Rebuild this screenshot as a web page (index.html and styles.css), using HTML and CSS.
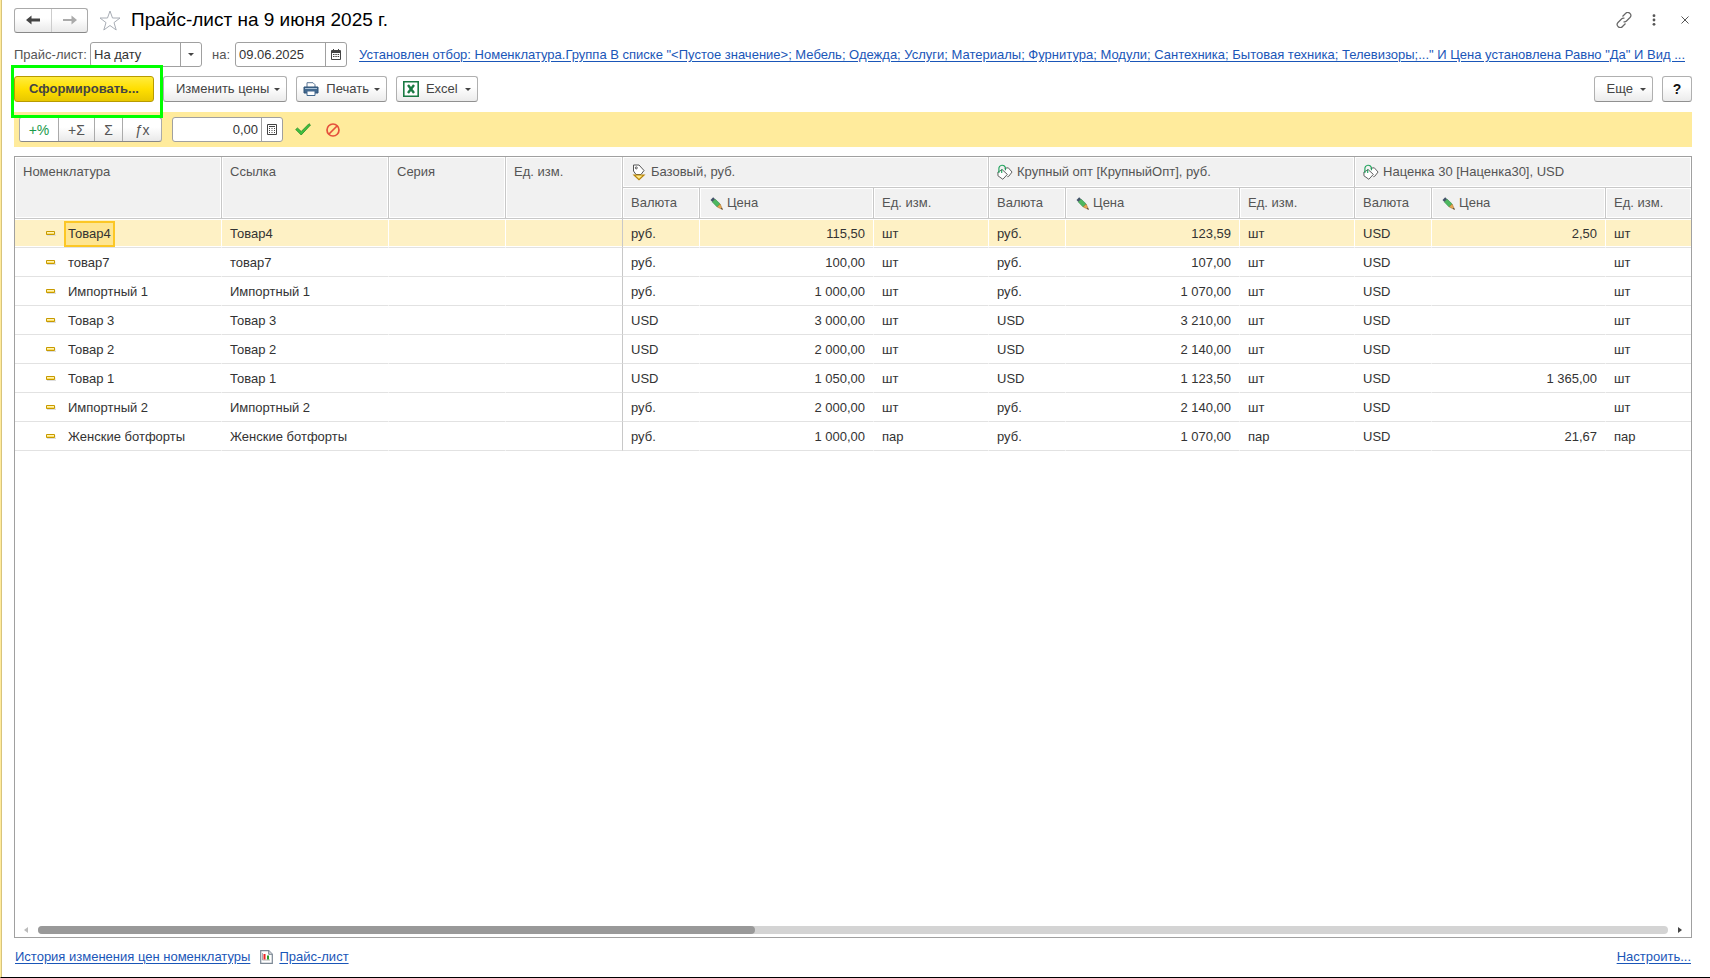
FILE: index.html
```html
<!DOCTYPE html>
<html lang="ru">
<head>
  <meta charset="UTF-8">
  <title>Прайс-лист на 9 июня 2025 г.</title>
  <link rel="stylesheet" href="styles.css">
</head>
<body>
  <!-- icons -->
  <svg class="sprite" aria-hidden="true">
    <symbol id="i-tag" viewBox="0 0 14 17">
      <path d="M1.500 1h5.500l5 5.500-3 4H4L1.500 7z" fill="#fff" stroke="#555"/>
      <circle cx="4.300" cy="3.900" r="1" fill="none" stroke="#555"/>
      <path d="M2 11h10L7 15.700z" fill="#ffe88a" stroke="#b8860b" stroke-width="1.200"/>
    </symbol>
    <symbol id="i-tags" viewBox="0 0 17 17">
      <path d="M8 4l4-.5 4 4.500-3.500 4.500-1.500.5" fill="#fff" stroke="#555"/>
      <path d="M1 8l4.500-2.500 5.500 5-4.800 5.200L1 12z" fill="#fff" stroke="#555"/>
      <path d="M2 9V4.500a3.500 3.500 0 0 1 7-.5V6M5 5v4" fill="none" stroke="#1fa35c" stroke-width="1.200"/>
    </symbol>
    <symbol id="i-pencil" viewBox="0 0 13 13">
      <path d="M.5 3L3.200.3l2 1.900-2.800 2.900z" fill="#44546a"/>
      <path d="M2.400 5.100l2.800-2.900 5 4.800-3 3z" fill="#4db85f" stroke="#2f8a45" stroke-width=".6"/>
      <path d="M7.200 10l3-3 2.300 5.500z" fill="#e8a850" stroke="#9a6b2c" stroke-width=".5"/>
      <path d="M10.800 11.800l1.200-1 .7 1.900z" fill="#444"/>
    </symbol>
    <symbol id="i-item" viewBox="0 0 10 6">
      <path d="M1 4.500h9V1.500" fill="none" stroke="#ddd"/>
      <path d="M.5.5h8v3h-8z" fill="#ffe169" stroke="#c79a00"/>
      <path d="M1 1.500h7" stroke="#fff3b5"/>
    </symbol>
    <symbol id="i-calendar" viewBox="0 0 10 11">
      <path d="M.5 1.500h9v9h-9z" fill="#fff" stroke="#444"/>
      <path d="M1 2.500h8M1 3.500h8M2.500 0v2M7.500 0v2" stroke="#444"/>
      <path d="M2 5.500h1.500m.8 0h1.500m.8 0h1.500M2 7.500h1.500m.8 0h1.500m.8 0h1.500" stroke="#444"/>
    </symbol>
    <symbol id="i-calc" viewBox="0 0 10 11">
      <path d="M.5.5h9v10h-9z" fill="#fff" stroke="#444"/>
      <path d="M2 2.500h6" stroke="#444"/>
      <path d="M2 4.500h1m1.500 0h1m1.500 0h1M2 6.500h1m1.500 0h1m1.500 0h1M2 8.500h1m1.500 0h1m1.500 0h1" stroke="#444"/>
    </symbol>
  </svg>

  <header class="title-row">
    <div class="nav">
      <button type="button" aria-label="Назад"><svg width="14" height="10" viewBox="0 0 14 10"><path d="M0 5l5.500-4.500v3H14v3H5.500v3z" fill="#444"/></svg></button>
      <button type="button" aria-label="Вперед" disabled><svg width="14" height="10" viewBox="0 0 14 10"><path d="M14 5L8.500.5v3.500H0v2h8.500v3.500z" fill="#aaa"/></svg></button>
    </div>
    <svg class="star" width="22" height="21" viewBox="0 0 22 21"><path d="M11 1l2.500 7h7.500l-6 4.600 2.200 7.400-6.200-4.500L4.800 20 7 12.600 1 8h7.500z" fill="#fff" stroke="#a8adb5"/></svg>
    <h1>Прайс-лист на 9 июня 2025 г.</h1>
    <div class="window-tools">
      <button type="button" aria-label="Ссылка"><svg width="16" height="16" viewBox="0 0 16 16" fill="none" stroke="#666" stroke-width="1.200"><path d="M6.500 4.500l3-3a2.900 2.900 0 0 1 4.500 4l-3.500 3.500a2.900 2.900 0 0 1-3 .7M9.500 11.500l-3 3a2.900 2.900 0 0 1-4.500-4L5.500 7a2.900 2.900 0 0 1 3-.7"/></svg></button>
      <button class="tool-menu" type="button" aria-label="Меню"><svg width="4" height="12" viewBox="0 0 4 12" fill="#555"><circle cx="2" cy="1.700" r="1.400"/><circle cx="2" cy="6" r="1.400"/><circle cx="2" cy="10.300" r="1.400"/></svg></button>
      <button type="button" aria-label="Закрыть"><svg width="8" height="8" viewBox="0 0 8 8" stroke="#555"><path d="M.5.5l7 7M7.500.5l-7 7"/></svg></button>
    </div>
  </header>

  <div class="filter-row">
    <label for="mode">Прайс-лист:</label>
    <div class="field">
      <select id="mode"><option>На дату</option></select>
      <span class="field-btn"><i class="caret"></i></span>
    </div>
    <label class="label-on" for="date">на:</label>
    <div class="field">
      <input id="date" type="text" value="09.06.2025">
      <button class="field-btn" type="button" aria-label="Календарь"><svg width="10" height="11"><use href="#i-calendar"/></svg></button>
    </div>
    <a class="filter-link" href="#">Установлен отбор: Номенклатура.Группа В списке "&lt;Пустое значение&gt;; Мебель; Одежда; Услуги; Материалы; Фурнитура; Модули; Сантехника; Бытовая техника; Телевизоры;..." И Цена установлена Равно "Да" И Вид ...</a>
  </div>

  <div class="command-row">
    <div class="highlight"><button class="btn btn-main" type="button">Сформировать...</button></div>
    <button class="btn btn-prices" type="button">Изменить цены <i class="caret"></i></button>
    <button class="btn" type="button">
      <svg width="16" height="14" viewBox="0 0 16 14"><path d="M4 5V.7h6l2 2V5" fill="#fff" stroke="#5b7594"/><path d="M1 5h14v6H1z" fill="#42698f" stroke="#2f5376"/><path d="M2 6.500h12" stroke="#a9c1d8"/><path d="M4 9h8v4.500H4z" fill="#fff" stroke="#42698f"/></svg>
      Печать <i class="caret"></i>
    </button>
    <button class="btn btn-excel" type="button">
      <svg width="16" height="16" viewBox="0 0 16 16"><path d="M.8.8h14.400v14.400H.8z" fill="#fff" stroke="#1a7a43" stroke-width="1.600"/><path d="M5 4l6 8M11 4l-6 8" stroke="#1a7a43" stroke-width="2.400"/></svg>
      Excel <i class="caret"></i>
    </button>
    <button class="btn btn-more" type="button">Еще <i class="caret"></i></button>
    <button class="btn btn-help" type="button">?</button>
  </div>

  <div class="edit-panel">
    <div class="calc-group">
      <button class="calc-percent" type="button">+%</button>
      <button class="calc-add" type="button">+Σ</button>
      <button class="calc-sum" type="button">Σ</button>
      <button class="calc-fx" type="button"><em>ƒ</em>x</button>
    </div>
    <div class="field field-amount">
      <input type="text" value="0,00" aria-label="Значение">
      <button class="field-btn" type="button" aria-label="Калькулятор"><svg width="10" height="11"><use href="#i-calc"/></svg></button>
    </div>
    <button class="icon-btn" type="button" aria-label="Применить"><svg width="16" height="13" viewBox="0 0 16 13"><path d="M.7 6.500L2.500 5l3.700 3.500L14 .7l1.500 1.300-9.300 10z" fill="#3fc03f" stroke="#268a26" stroke-width=".8"/></svg></button>
    <button class="icon-btn" type="button" aria-label="Отменить"><svg width="14" height="14" viewBox="0 0 14 14" fill="none" stroke="#e5503c" stroke-width="1.700"><circle cx="7" cy="7" r="6"/><path d="M3 11l8-8"/></svg></button>
  </div>

  <main class="grid">
    <div class="grid-view">
      <table>
        <colgroup>
          <col class="c-name"><col class="c-link"><col class="c-mid"><col class="c-mid">
          <col class="c-cur"><col class="c-price"><col class="c-unit">
          <col class="c-cur"><col class="c-price"><col class="c-unit">
          <col class="c-cur"><col class="c-price"><col>
        </colgroup>
        <thead>
          <tr>
            <th rowspan="2">Номенклатура</th>
            <th rowspan="2">Ссылка</th>
            <th rowspan="2">Серия</th>
            <th rowspan="2">Ед. изм.</th>
            <th colspan="3"><span class="head"><svg width="16" height="17"><use href="#i-tag"/></svg>Базовый, руб.</span></th>
            <th colspan="3"><span class="head"><svg width="16" height="17"><use href="#i-tags"/></svg>Крупный опт [КрупныйОпт], руб.</span></th>
            <th colspan="3"><span class="head"><svg width="16" height="17"><use href="#i-tags"/></svg>Наценка 30 [Наценка30], USD</span></th>
          </tr>
          <tr>
            <th>Валюта</th>
            <th><span class="head head-price"><svg width="13" height="13"><use href="#i-pencil"/></svg>Цена</span></th>
            <th>Ед. изм.</th>
            <th>Валюта</th>
            <th><span class="head head-price"><svg width="13" height="13"><use href="#i-pencil"/></svg>Цена</span></th>
            <th>Ед. изм.</th>
            <th>Валюта</th>
            <th><span class="head head-price"><svg width="13" height="13"><use href="#i-pencil"/></svg>Цена</span></th>
            <th>Ед. изм.</th>
          </tr>
        </thead>
        <tbody>
          <tr class="selected">
            <td><svg width="10" height="6"><use href="#i-item"/></svg><span class="cell">Товар4</span></td><td>Товар4</td><td></td><td class="fixed-end"></td>
            <td>руб.</td><td class="num">115,50</td><td>шт</td>
            <td>руб.</td><td class="num">123,59</td><td>шт</td>
            <td>USD</td><td class="num">2,50</td><td>шт</td>
          </tr>
          <tr>
            <td><svg width="10" height="6"><use href="#i-item"/></svg><span class="cell">товар7</span></td><td>товар7</td><td></td><td class="fixed-end"></td>
            <td>руб.</td><td class="num">100,00</td><td>шт</td>
            <td>руб.</td><td class="num">107,00</td><td>шт</td>
            <td>USD</td><td class="num"></td><td>шт</td>
          </tr>
          <tr>
            <td><svg width="10" height="6"><use href="#i-item"/></svg><span class="cell">Импортный 1</span></td><td>Импортный 1</td><td></td><td class="fixed-end"></td>
            <td>руб.</td><td class="num">1 000,00</td><td>шт</td>
            <td>руб.</td><td class="num">1 070,00</td><td>шт</td>
            <td>USD</td><td class="num"></td><td>шт</td>
          </tr>
          <tr>
            <td><svg width="10" height="6"><use href="#i-item"/></svg><span class="cell">Товар 3</span></td><td>Товар 3</td><td></td><td class="fixed-end"></td>
            <td>USD</td><td class="num">3 000,00</td><td>шт</td>
            <td>USD</td><td class="num">3 210,00</td><td>шт</td>
            <td>USD</td><td class="num"></td><td>шт</td>
          </tr>
          <tr>
            <td><svg width="10" height="6"><use href="#i-item"/></svg><span class="cell">Товар 2</span></td><td>Товар 2</td><td></td><td class="fixed-end"></td>
            <td>USD</td><td class="num">2 000,00</td><td>шт</td>
            <td>USD</td><td class="num">2 140,00</td><td>шт</td>
            <td>USD</td><td class="num"></td><td>шт</td>
          </tr>
          <tr>
            <td><svg width="10" height="6"><use href="#i-item"/></svg><span class="cell">Товар 1</span></td><td>Товар 1</td><td></td><td class="fixed-end"></td>
            <td>USD</td><td class="num">1 050,00</td><td>шт</td>
            <td>USD</td><td class="num">1 123,50</td><td>шт</td>
            <td>USD</td><td class="num">1 365,00</td><td>шт</td>
          </tr>
          <tr>
            <td><svg width="10" height="6"><use href="#i-item"/></svg><span class="cell">Импортный 2</span></td><td>Импортный 2</td><td></td><td class="fixed-end"></td>
            <td>руб.</td><td class="num">2 000,00</td><td>шт</td>
            <td>руб.</td><td class="num">2 140,00</td><td>шт</td>
            <td>USD</td><td class="num"></td><td>шт</td>
          </tr>
          <tr>
            <td><svg width="10" height="6"><use href="#i-item"/></svg><span class="cell">Женские ботфорты</span></td><td>Женские ботфорты</td><td></td><td class="fixed-end"></td>
            <td>руб.</td><td class="num">1 000,00</td><td>пар</td>
            <td>руб.</td><td class="num">1 070,00</td><td>пар</td>
            <td>USD</td><td class="num">21,67</td><td>пар</td>
          </tr>
        </tbody>
      </table>
    </div>
    <div class="scrollbar">
      <svg width="4" height="6" viewBox="0 0 4 6"><path d="M4 0v6L0 3z" fill="#bbb"/></svg>
      <div class="track"><div class="thumb"></div></div>
      <svg width="4" height="6" viewBox="0 0 4 6"><path d="M0 0v6l4-3z" fill="#444"/></svg>
    </div>
  </main>

  <footer class="bottom-row">
    <a href="#">История изменения цен номенклатуры</a>
    <svg width="13" height="14" viewBox="0 0 13 14"><path d="M.7.7h8l3.600 3.600v9H.7z" fill="#fff" stroke="#7b8794" stroke-width="1.200"/><path d="M8.700.7v3.600h3.600" fill="#ddd" stroke="#7b8794"/><path d="M2.500 3v7H10" fill="none" stroke="#999" stroke-width=".8"/><path d="M4.500 4v5.500" stroke="#e22" stroke-width="2"/><path d="M8 5.500v4" stroke="#2a9a2a" stroke-width="2"/></svg>
    <a href="#">Прайс-лист</a>
    <a class="setup" href="#">Настроить...</a>
  </footer>
</body>
</html>
```
FILE: styles.css
```css
* {
  box-sizing: border-box;
}

body {
  margin: 0;
  height: 100vh;
  padding: 6px 18px 0 13px;
  display: flex;
  flex-direction: column;
  font-family: "Liberation Sans", Arial, sans-serif;
  font-size: 13px;
  line-height: 16px;
  color: #333;
  background: #fff;
  border-left: 1px solid #ffeb9c;
  border-bottom: 1px solid #000;
  box-shadow: inset 1px 0 #d8c47c;
}

.sprite {
  position: absolute;
  width: 0;
  height: 0;
}

svg {
  flex: none;
}

button,
input,
select {
  font: inherit;
  color: inherit;
  margin: 0;
}

button {
  padding: 0;
  background: none;
  border: none;
}

a {
  color: #1a56b8;
  text-decoration: underline;
  text-underline-offset: 2px;
}

.caret {
  display: inline-block;
  border: 3px solid transparent;
  border-top-color: #444;
  border-bottom: 0;
}

/* title */
.title-row {
  display: flex;
  align-items: center;
  height: 28px;
}

.nav,
.calc-group {
  display: flex;
  height: 25px;
  border: 1px solid #aaa;
  border-bottom-color: #888;
  border-radius: 3px;
  background: linear-gradient(#fff 40%, #e9e9e9);
}

.nav button {
  width: 36px;
  display: flex;
  align-items: center;
  justify-content: center;
}

.nav button + button {
  border-left: 1px solid #ccc;
}

.star {
  margin: 0 10px 0 11px;
}

h1 {
  margin: 0;
  font-size: 19px;
  line-height: 24px;
  font-weight: normal;
  color: #000;
}

.window-tools {
  display: flex;
  align-items: center;
  gap: 20px;
  margin-left: auto;
  padding-right: 3px;
}

.window-tools button {
  display: flex;
}

.window-tools .tool-menu {
  padding-right: 5px;
}

/* filter */
.filter-row {
  display: flex;
  align-items: center;
  height: 25px;
  margin-top: 8px;
}

.filter-row label {
  width: 76px;
  color: #555;
}

.filter-row .label-on {
  width: 33px;
  padding-left: 10px;
}

.field {
  display: flex;
  flex: none;
  width: 112px;
  height: 25px;
  border: 1px solid #a0a0a0;
  border-radius: 3px;
  background: #fff;
  overflow: hidden;
}

.field input,
.field select {
  flex: 1;
  min-width: 0;
  padding: 0 3px;
  border: 0;
  appearance: none;
  background: none;
  outline: none;
}

.field-btn {
  display: flex;
  align-items: center;
  justify-content: center;
  width: 21px;
  border-left: 1px solid #a0a0a0;
}

.filter-link {
  margin-left: 12px;
  flex: 1;
  min-width: 0;
  white-space: nowrap;
  overflow: hidden;
}

/* commands */
.command-row {
  display: flex;
  gap: 9px;
  margin: 9px 0 10px;
}

.btn {
  display: flex;
  align-items: center;
  height: 26px;
  padding: 0 6px;
  gap: 5px;
  color: #444;
  border: 1px solid #b0b0b0;
  border-bottom-color: #909090;
  border-radius: 3px;
  background: linear-gradient(#fff 40%, #ebebeb);
  white-space: nowrap;
}

.btn svg {
  margin-right: 2px;
}

.highlight {
  position: relative;
}

.highlight::after {
  content: "";
  position: absolute;
  inset: -11px -9px -16px -3px;
  border: 3px solid #00ff00;
  pointer-events: none;
}

.btn-main {
  width: 140px;
  justify-content: center;
  font-weight: bold;
  border-color: #b89b00;
  background: linear-gradient(#ffec3d, #ffdf00 50%, #e8c800);
}

.btn-prices,
.btn-more {
  padding-left: 12px;
}

.btn-excel,
.btn-more {
  gap: 7px;
}

.btn-excel svg {
  margin-right: 0;
}

.btn-more {
  margin-left: auto;
}

.btn-help {
  width: 30px;
  justify-content: center;
  font-size: 14px;
  font-weight: bold;
  color: #111;
}

/* price editing */
.edit-panel {
  display: flex;
  align-items: center;
  height: 35px;
  padding: 0 5px;
  margin-bottom: 9px;
  background: #ffeb9c;
}

.calc-group {
  font-size: 14px;
  color: #555;
  overflow: hidden;
}

.calc-group button + button {
  border-left: 1px solid #aaa;
}

.calc-percent {
  width: 38px;
  color: #1a9a4b;
  background: #fff;
}

.calc-add {
  width: 36px;
}

.calc-sum {
  width: 28px;
}

.calc-fx {
  width: 39px;
}

.field-amount {
  width: 111px;
  margin: 0 12px 0 10px;
}

.field-amount input {
  text-align: right;
}

.icon-btn {
  display: flex;
  margin-right: 15px;
}

/* table */
.grid {
  flex: 1;
  min-height: 0;
  display: flex;
  flex-direction: column;
  border: 1px solid #a0a0a0;
}

.grid-view {
  flex: 1;
  min-height: 0;
  overflow: hidden;
}

table {
  width: 100%;
  table-layout: fixed;
  border-collapse: separate;
  border-spacing: 0;
}

.c-name { width: 207px; }
.c-link { width: 167px; }
.c-mid { width: 117px; }
.c-cur { width: 77px; }
.c-price { width: 174px; }
.c-unit { width: 115px; }

th {
  height: 31px;
  padding: 7px 8px 0;
  text-align: left;
  vertical-align: top;
  font-weight: normal;
  color: #555;
  white-space: nowrap;
  background: #f1f1f1;
  border-right: 1px solid #c8c8c8;
  border-bottom: 1px solid #c8c8c8;
  box-shadow: inset 0 0 0 1px #fff;
}

th:last-child,
td:last-child {
  border-right: 0;
}

.head {
  display: flex;
  align-items: center;
  gap: 4px;
  height: 16px;
}

.head-price {
  padding-left: 2px;
}

td {
  height: 29px;
  padding: 1px 8px 0;
  white-space: nowrap;
  border-right: 1px solid #fff;
  border-bottom: 1px solid #e2e2e2;
}

td:first-child {
  padding-left: 31px;
}

td svg {
  margin-right: 8px;
  vertical-align: middle;
}

.cell {
  display: inline-block;
  height: 26px;
  padding: 3px 2px;
  border: 2px solid transparent;
  vertical-align: middle;
}

.fixed-end {
  border-right-color: #c8c8c8;
}

.num {
  text-align: right;
}

.selected td {
  background: #fef1c5;
  box-shadow: inset 0 1px #fff, inset 0 -1px #fff;
}

.selected .cell {
  background: #fee592;
  border-color: #fcc725;
}

.scrollbar {
  display: flex;
  align-items: center;
  gap: 10px;
  height: 8px;
  margin: 0 9px 3px;
}

.track {
  flex: 1;
  height: 8px;
  border-radius: 4px;
  background: #d4d4d4;
}

.thumb {
  width: 44%;
  height: 8px;
  border-radius: 4px;
  background: #999;
}

/* links */
.bottom-row {
  display: flex;
  align-items: center;
  height: 39px;
  padding: 0 1px 2px;
}

.bottom-row svg {
  margin: 0 6px 0 10px;
}

.setup {
  margin-left: auto;
}
```
